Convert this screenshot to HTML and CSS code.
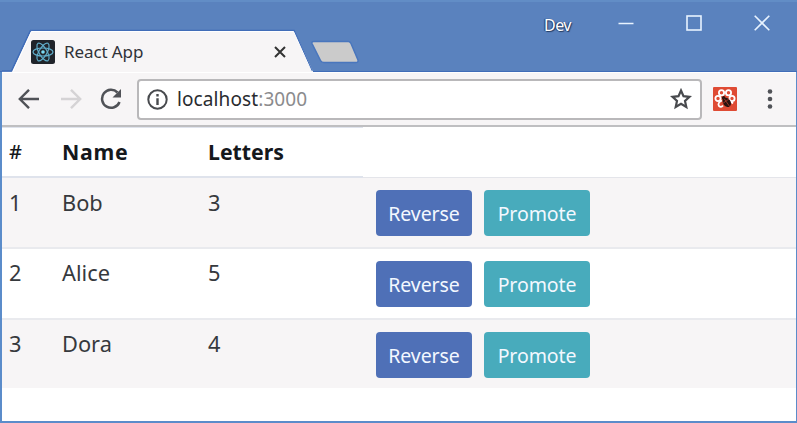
FILE: index.html
```html
<!DOCTYPE html>
<html lang="en">
<head>
<meta charset="utf-8">
<title>React App</title>
<link rel="stylesheet" href="styles.css">
</head>
<body>
<div class="window">
  <header class="titlebar">
    <div class="tab">
      <svg class="tab-shape" width="312" height="43" viewBox="0 0 312 43"><path d="M0 42.5H9.500L28.500 2H292.500L311 42.500V43H0Z" fill="#f7f5f6"/><path d="M0 42H9.500L28.500 1.500H292L310 42" fill="none" stroke="#416db8" stroke-width="1.600"/><path d="M11 42.500L29.500 2.500H291.500L309.500 42.500" fill="none" stroke="#fff" stroke-width="1"/></svg>
      <svg class="favicon" width="24" height="24" viewBox="0 0 24 24"><rect width="24" height="24" rx="2.500" fill="#20242a"/><g fill="none" stroke="#61aecb" stroke-width="1.200"><ellipse cx="12" cy="12" rx="10" ry="4"/><ellipse cx="12" cy="12" rx="10" ry="4" transform="rotate(60 12 12)"/><ellipse cx="12" cy="12" rx="10" ry="4" transform="rotate(120 12 12)"/></g><circle cx="12" cy="12" r="1.800" fill="#7bdcf5"/></svg>
      <span class="tab-title">React App</span>
      <svg class="tab-close" width="12" height="12" viewBox="0 0 12 12"><path d="M1 1L11 11M11 1L1 11" stroke="#333" stroke-width="2"/></svg>
    </div>
    <svg class="new-tab" width="50" height="24" viewBox="0 0 50 24"><path d="M3.500 1.500H38.500Q40 1.500 41 3.500L48 20Q48.500 22.500 46 22.500H14Q11.500 22.500 10.500 20.500L2 3.500Q1.500 1.500 3.500 1.500Z" fill="#cbcbcb" stroke="#4976bd" stroke-width="1.500"/></svg>
    <div class="controls">
      <span class="profile">Dev</span>
      <svg width="16" height="16" viewBox="0 0 16 16"><path d="M.5 8.500H15.500" stroke="#e8f3ff" stroke-width="1.500"/></svg>
      <svg width="16" height="16" viewBox="0 0 16 16"><rect x="1" y="1" width="14" height="14" fill="none" stroke="#e8f3ff" stroke-width="1.600"/></svg>
      <svg width="16" height="16" viewBox="0 0 16 16"><path d="M.7.7L15.300 15.300M15.300.7L.7 15.300" stroke="#e8f3ff" stroke-width="1.600"/></svg>
    </div>
  </header>
  <nav class="toolbar">
    <svg class="back" width="22" height="20" viewBox="0 0 22 20"><path d="M21 10H2M11 .8L1.800 10L11 19.200" fill="none" stroke="#505257" stroke-width="2.400"/></svg>
    <svg class="forward" width="22" height="20" viewBox="0 0 22 20"><path d="M1 10H20M11 .8L20.200 10L11 19.200" fill="none" stroke="#d5d3d5" stroke-width="2.400"/></svg>
    <svg class="reload" width="22" height="22" viewBox="0 0 22 22"><path d="M17.500 4.500A9 9 0 1 0 19.500 14" fill="none" stroke="#505257" stroke-width="2.500"/><path d="M21 1V9.500H12.500Z" fill="#505257"/></svg>
    <div class="address">
      <svg class="info" width="21" height="21" viewBox="0 0 21 21"><circle cx="10.500" cy="10.500" r="9.200" fill="none" stroke="#484a4e" stroke-width="2"/><path d="M10.500 5V7.500M10.500 9.200V16" stroke="#484a4e" stroke-width="2.400"/></svg>
      <span class="url">localhost<span class="port">:3000</span></span>
      <svg class="star" width="22" height="22" viewBox="0 0 22 22"><path d="M11 2.500L13.500 8.200L19.500 8.800L15 12.900L16.300 19L11 15.800L5.700 19L7 12.900L2.500 8.800L8.500 8.200Z" fill="none" stroke="#484a4e" stroke-width="2.200"/></svg>
    </div>
    <svg class="extension" width="24" height="24" viewBox="0 0 24 24"><rect width="24" height="24" rx="1" fill="#df4b34"/><g fill="none" stroke="#fff" stroke-width="1.800"><circle cx="8.500" cy="5.800" r="2.600"/><circle cx="15.500" cy="5.800" r="2.600"/><circle cx="5" cy="11.500" r="2.600"/><circle cx="19" cy="11.500" r="2.600"/><path d="M9 13.500Q4 16 6 19Q8 21 10 18.500M18 14.500L20 16.500"/></g><g transform="rotate(-35 13.500 15)"><ellipse cx="13.500" cy="15.500" rx="3.800" ry="5" fill="#29130f"/><circle cx="13.500" cy="10" r="1.800" fill="#29130f"/><path d="M13.500 11V21M9.800 14L17.500 14" stroke="#a63827" stroke-width=".8"/></g></svg>
    <svg class="menu" width="6" height="22" viewBox="0 0 6 22"><g fill="#505257"><circle cx="3" cy="3.500" r="2.300"/><circle cx="3" cy="11" r="2.300"/><circle cx="3" cy="18.500" r="2.300"/></g></svg>
  </nav>
  <main>
    <table>
      <colgroup><col class="c-id"><col class="c-name"><col class="c-letters"><col></colgroup>
      <thead><tr><th>#</th><th>Name</th><th>Letters</th><td class="blank"></td></tr></thead>
      <tbody>
        <tr><td>1</td><td>Bob</td><td>3</td><td><div class="actions"><button class="reverse">Reverse</button><button class="promote">Promote</button></div></td></tr>
        <tr><td>2</td><td>Alice</td><td>5</td><td><div class="actions"><button class="reverse">Reverse</button><button class="promote">Promote</button></div></td></tr>
        <tr><td>3</td><td>Dora</td><td>4</td><td><div class="actions"><button class="reverse">Reverse</button><button class="promote">Promote</button></div></td></tr>
      </tbody>
    </table>
  </main>
</div>
</body>
</html>
```
FILE: styles.css
```css
* { box-sizing: border-box; }
body { margin: 0; overflow: hidden; font-family: "Noto Sans", sans-serif; }
svg { display: block; flex: none; }
.window { width: 797px; height: 423px; border: solid #5b8cca; border-width: 0 1px 2px 2px; background: #fff; }
.titlebar { display: flex; height: 72px; margin: 0 -1px 0 -2px; padding: 29px 0 0 2px; background: #5a82be; border-top: 2px solid #628dc6; border-bottom: 1px solid #416db8; }
.tab { position: relative; display: flex; align-items: center; width: 308px; height: 43px; padding-left: 29px; }
.tab-shape { position: absolute; left: 0; top: -2px; height: 43px; }
.favicon, .tab-title, .tab-close { position: relative; top: -1px; }
.tab-title { width: 209px; margin-left: 9px; font-size: 17px; letter-spacing: -.1px; color: #303238; }
.tab-close { margin-left: 1px; }
.new-tab { margin: 9px 0 0; }
.controls { display: flex; align-items: center; gap: 52px; height: 24px; margin: -20px 27px 0 auto; }
.profile { margin-right: -5px; padding-top: 3px; font-size: 16px; line-height: 24px; letter-spacing: -.5px; color: #fff; text-shadow: 1px 1px 1px #243b60, -1px 0 1px #243b60; }
.toolbar { display: flex; align-items: center; height: 55px; padding: 0 23px 0 16px; background: #f7f5f6; border-top: 1px solid #fff; border-bottom: 2px solid #bfbfc1; }
.forward { margin-left: 20px; }
.reload { margin-left: 18px; }
.address { display: flex; align-items: center; width: 565px; height: 41px; margin-left: 15px; padding: 0 8px; border: 2px solid #b9b8ba; border-radius: 4px; background: #fff; }
.url { margin-left: 9px; font-size: 19px; letter-spacing: .1px; color: #292b2f; }
.port { color: #8b8b8d; }
.star { margin-left: auto; }
.extension { margin-left: 11px; }
.menu { margin-left: auto; }
table { width: 100%; table-layout: fixed; border-spacing: 0; color: #36393d; font-size: 21.8px; line-height: 28px; }
.c-id { width: 47px; }
.c-name { width: 146px; }
.c-letters { width: 168px; }
th, td { padding: 11px 0 0 13px; text-align: left; vertical-align: top; }
th:first-child, td:first-child { padding-left: 7px; }
th { height: 51px; padding-top: 10px; border-top: 1px solid #dfe3ec; border-bottom: 2px solid #dfe3ec; color: #15181c; font-size: 21.3px; }
th:first-child { font-weight: 500; font-size: 20px; }
th:nth-child(2) { letter-spacing: .7px; }
tbody td { height: 71px; border-top: 2px solid #e9eaee; padding-top: 10px; }
tbody tr:first-child td { height: 69px; border-top: 0; padding-top: 11px; }
tbody tr:last-child td { height: 70px; padding-top: 10px; }
tbody tr:nth-child(odd) { background: #f7f5f6; }
.blank { border-bottom: 1px solid #e4e5ea; }
.actions { display: flex; gap: 12px; padding-top: 2px; }
tbody tr:first-child .actions { padding-top: 1px; }
button { height: 46px; padding: 1px 0 0; border: 0; border-radius: 4px; color: #f3f8ff; font: 19.5px/43px "Noto Sans", sans-serif; letter-spacing: -.1px; }
.reverse { width: 96px; background: #4f70b7; }
.promote { width: 106px; background: #48abbc; }
```
